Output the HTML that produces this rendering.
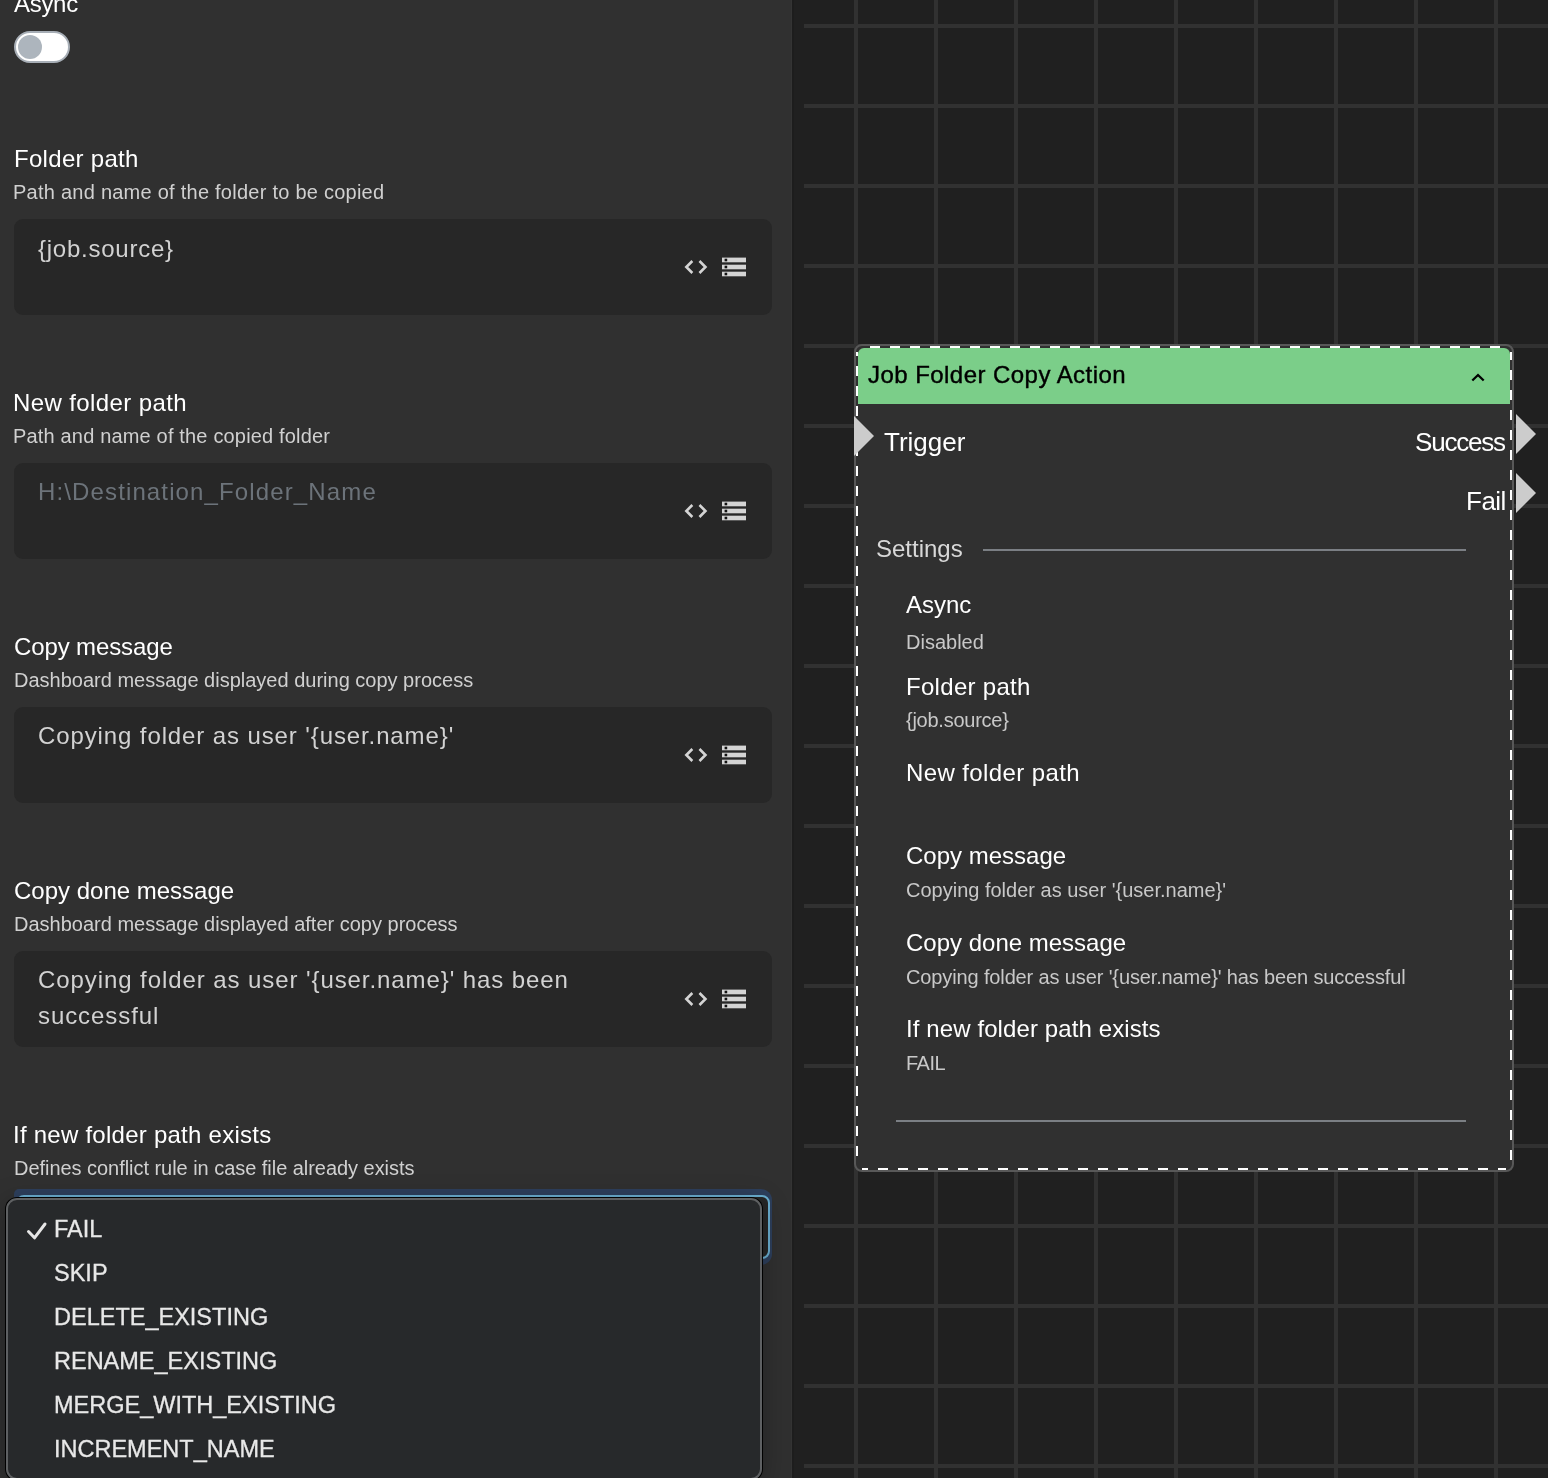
<!DOCTYPE html>
<html><head><meta charset="utf-8">
<style>
*{box-sizing:border-box;margin:0;padding:0}
html,body{width:1548px;height:1478px;overflow:hidden;background:#303030;font-family:"Liberation Sans",sans-serif}
.a{position:absolute;white-space:pre;line-height:1;will-change:transform}
.lbl{font-size:24px;color:#fff}
.dsc{font-size:20px;color:#d0d0d0}
.inp{position:absolute;left:14px;width:758px;height:96px;background:#272727;border-radius:9px}
.itx{font-size:24px;color:#d2d2d2}
#panel{position:absolute;left:0;top:0;width:792px;height:1478px;background:#303030}
#canvas{position:absolute;left:792px;top:0;width:756px;height:1478px;background:#202020;border-left:2px solid #1d1d1d}
#grid{position:absolute;left:804px;top:0;width:744px;height:1478px;
 background-image:linear-gradient(#313131 4px,transparent 4px),linear-gradient(90deg,#313131 4px,transparent 4px);
 background-size:80px 80px;background-position:0 24px,50px 0}
.pop{font-size:23.5px;color:#e8e8e8;-webkit-text-stroke:0.3px #e8e8e8}
.dash{position:absolute}
.nl{left:906px;font-size:24px;color:#fff}
.nv{left:906px;font-size:20px;color:#c8c8c8}
</style></head><body>
<div id="panel"></div>
<div id="canvas"></div>
<div id="grid"></div>
<div style="position:absolute;left:791px;top:0;width:1px;height:1478px;background:#343434"></div>

<!-- left panel -->
<div class="a lbl" style="left:14px;top:-7.9px;letter-spacing:-0.3px">Async</div>
<div style="position:absolute;left:14px;top:31px;width:56px;height:32px;border-radius:16px;background:#fff;border:2px solid #a7aeb6"></div>
<div style="position:absolute;left:18px;top:35px;width:24px;height:24px;border-radius:12px;background:#adb5bd"></div>

<div class="a lbl" style="left:14px;top:146.8px;letter-spacing:0.3px">Folder path</div>
<div class="a dsc" style="left:13px;top:181.9px;letter-spacing:0.25px">Path and name of the folder to be copied</div>
<div class="inp" style="top:219px"></div>
<div class="a itx" style="left:38px;top:236.5px;letter-spacing:0.75px">{job.source}</div>

<div class="a lbl" style="left:13px;top:390.7px;letter-spacing:0.4px">New folder path</div>
<div class="a dsc" style="left:13px;top:425.9px;letter-spacing:0.17px">Path and name of the copied folder</div>
<div class="inp" style="top:463px"></div>
<div class="a itx" style="left:38.3px;top:479.5px;letter-spacing:1.13px;color:#6c737a">H:\Destination_Folder_Name</div>

<div class="a lbl" style="left:13.5px;top:634.9px;letter-spacing:-0.12px">Copy message</div>
<div class="a dsc" style="left:14px;top:670.1px">Dashboard message displayed during copy process</div>
<div class="inp" style="top:707px"></div>
<div class="a itx" style="left:38px;top:723.7px;letter-spacing:0.89px">Copying folder as user '{user.name}'</div>

<div class="a lbl" style="left:14px;top:878.7px">Copy done message</div>
<div class="a dsc" style="left:14px;top:914.1px">Dashboard message displayed after copy process</div>
<div class="inp" style="top:951px"></div>
<div class="a itx" style="left:38px;top:967.5px;letter-spacing:0.92px">Copying folder as user '{user.name}' has been</div>
<div class="a itx" style="left:38px;top:1003.5px;letter-spacing:0.92px">successful</div>

<div class="a lbl" style="left:12.5px;top:1122.7px;letter-spacing:0.25px">If new folder path exists</div>
<div class="a dsc" style="left:13.5px;top:1158.1px;letter-spacing:-0.04px">Defines conflict rule in case file already exists</div>

<svg style="position:absolute;left:676px;top:250px" width="80" height="34" viewBox="0 0 80 34">
<polyline points="16.34,11 10.34,17 16.34,23" fill="none" stroke="#d4d4d4" stroke-width="2.6"/>
<polyline points="23.46,11 29.46,17 23.46,23" fill="none" stroke="#d4d4d4" stroke-width="2.6"/>
<rect x="46" y="7.6" width="24" height="4.7" fill="#d4d4d4"/><rect x="46" y="14.7" width="24" height="4.6" fill="#d4d4d4"/><rect x="46" y="21.7" width="24" height="4.6" fill="#d4d4d4"/>
<rect x="48.6" y="8.7" width="2.6" height="2.6" fill="#111"/><rect x="48.6" y="15.7" width="2.6" height="2.6" fill="#111"/><rect x="48.6" y="22.7" width="2.6" height="2.6" fill="#111"/>
</svg>
<svg style="position:absolute;left:676px;top:494px" width="80" height="34" viewBox="0 0 80 34">
<polyline points="16.34,11 10.34,17 16.34,23" fill="none" stroke="#d4d4d4" stroke-width="2.6"/>
<polyline points="23.46,11 29.46,17 23.46,23" fill="none" stroke="#d4d4d4" stroke-width="2.6"/>
<rect x="46" y="7.6" width="24" height="4.7" fill="#d4d4d4"/><rect x="46" y="14.7" width="24" height="4.6" fill="#d4d4d4"/><rect x="46" y="21.7" width="24" height="4.6" fill="#d4d4d4"/>
<rect x="48.6" y="8.7" width="2.6" height="2.6" fill="#111"/><rect x="48.6" y="15.7" width="2.6" height="2.6" fill="#111"/><rect x="48.6" y="22.7" width="2.6" height="2.6" fill="#111"/>
</svg>
<svg style="position:absolute;left:676px;top:738px" width="80" height="34" viewBox="0 0 80 34">
<polyline points="16.34,11 10.34,17 16.34,23" fill="none" stroke="#d4d4d4" stroke-width="2.6"/>
<polyline points="23.46,11 29.46,17 23.46,23" fill="none" stroke="#d4d4d4" stroke-width="2.6"/>
<rect x="46" y="7.6" width="24" height="4.7" fill="#d4d4d4"/><rect x="46" y="14.7" width="24" height="4.6" fill="#d4d4d4"/><rect x="46" y="21.7" width="24" height="4.6" fill="#d4d4d4"/>
<rect x="48.6" y="8.7" width="2.6" height="2.6" fill="#111"/><rect x="48.6" y="15.7" width="2.6" height="2.6" fill="#111"/><rect x="48.6" y="22.7" width="2.6" height="2.6" fill="#111"/>
</svg>
<svg style="position:absolute;left:676px;top:982px" width="80" height="34" viewBox="0 0 80 34">
<polyline points="16.34,11 10.34,17 16.34,23" fill="none" stroke="#d4d4d4" stroke-width="2.6"/>
<polyline points="23.46,11 29.46,17 23.46,23" fill="none" stroke="#d4d4d4" stroke-width="2.6"/>
<rect x="46" y="7.6" width="24" height="4.7" fill="#d4d4d4"/><rect x="46" y="14.7" width="24" height="4.6" fill="#d4d4d4"/><rect x="46" y="21.7" width="24" height="4.6" fill="#d4d4d4"/>
<rect x="48.6" y="8.7" width="2.6" height="2.6" fill="#111"/><rect x="48.6" y="15.7" width="2.6" height="2.6" fill="#111"/><rect x="48.6" y="22.7" width="2.6" height="2.6" fill="#111"/>
</svg>

<!-- select with focus ring -->
<div style="position:absolute;left:14px;top:1189px;width:758px;height:76px;border-radius:5px 11px 11px 5px;background:#2d3f5c"></div>
<div style="position:absolute;left:16px;top:1195px;width:754px;height:64px;border-radius:8px;background:#262626;border:2px solid #6aaed0"></div>

<!-- popup -->
<div style="position:absolute;left:5px;top:1197px;width:758px;height:284px;border-radius:12px;background:#000;box-shadow:0 6px 28px rgba(0,0,0,0.28)"></div>
<div style="position:absolute;left:6px;top:1198px;width:756px;height:282px;border-radius:11px;background:#27292b;border:2px solid #5e6062"></div>
<svg style="position:absolute;left:20px;top:1215px" width="32" height="32" viewBox="0 0 32 32"><polyline points="8.5,16.5 14.5,22.8 25,9" fill="none" stroke="#e6e6e6" stroke-width="3" stroke-linecap="round" stroke-linejoin="round"/></svg>
<div class="a pop" style="left:54px;top:1218.3px">FAIL</div>
<div class="a pop" style="left:54px;top:1262.1px">SKIP</div>
<div class="a pop" style="left:54px;top:1306.1px">DELETE_EXISTING</div>
<div class="a pop" style="left:54px;top:1350.1px">RENAME_EXISTING</div>
<div class="a pop" style="left:54px;top:1394.1px">MERGE_WITH_EXISTING</div>
<div class="a pop" style="left:54px;top:1438.1px">INCREMENT_NAME</div>

<!-- node -->
<div style="position:absolute;left:854px;top:344px;width:660px;height:828px;border-radius:8px;background:#303030;border:2px solid #585858"></div>
<div style="position:absolute;left:858px;top:348px;width:652px;height:56px;border-radius:6px 6px 0 0;background:#7bce89"></div>
<div class="dash" style="left:862px;top:346px;width:644px;height:2px;background-image:linear-gradient(90deg,#fff 0 10px,transparent 10px 20px);background-size:20px 2px;background-position:8px 0"></div>
<div class="dash" style="left:862px;top:1168px;width:644px;height:2px;background-image:linear-gradient(90deg,#fff 0 10px,transparent 10px 20px);background-size:20px 2px;background-position:16px 0"></div>
<div class="dash" style="left:856px;top:352px;width:2px;height:812px;background-image:linear-gradient(180deg,#fff 0 10px,transparent 10px 20px);background-size:2px 20px;background-position:0 14px"></div>
<div class="dash" style="left:1510px;top:352px;width:2px;height:812px;background-image:linear-gradient(180deg,#fff 0 10px,transparent 10px 20px);background-size:2px 20px;background-position:0 18px"></div>
<svg style="position:absolute;left:1460px;top:360px" width="40" height="35" viewBox="0 0 40 35"><polyline points="12.3,20.5 18,15 23.7,20.5" fill="none" stroke="#000" stroke-width="2.3"/></svg>
<div class="a" style="left:868px;top:362.7px;font-size:24px;color:#000;letter-spacing:0.45px;-webkit-text-stroke:0.4px #000">Job Folder Copy Action</div>
<svg style="position:absolute;left:854px;top:416px" width="20" height="40"><polygon points="0,0 20,20 0,40" fill="#cccccc"/></svg>
<svg style="position:absolute;left:1516px;top:414px" width="20" height="40"><polygon points="0,0 20,20 0,40" fill="#cccccc"/></svg>
<svg style="position:absolute;left:1516px;top:473px" width="20" height="40"><polygon points="0,0 20,20 0,40" fill="#cccccc"/></svg>
<div class="a" style="left:884px;top:429px;font-size:26px;color:#fff">Trigger</div>
<div class="a" style="right:43px;top:429px;font-size:26px;color:#fff;letter-spacing:-1.2px">Success</div>
<div class="a" style="right:42.5px;top:488px;font-size:26px;color:#fff;letter-spacing:-0.5px">Fail</div>
<div class="a" style="left:876px;top:537px;font-size:24px;color:#d8d8d8">Settings</div>
<div style="position:absolute;left:983px;top:549px;width:483px;height:2px;background:#7b7f84"></div>
<div class="a nl" style="top:592.7px">Async</div>
<div class="a nv" style="top:631.8px">Disabled</div>
<div class="a nl" style="top:674.6px;letter-spacing:0.3px">Folder path</div>
<div class="a nv" style="top:709.7px;letter-spacing:-0.25px">{job.source}</div>
<div class="a nl" style="top:761.3px;letter-spacing:0.4px">New folder path</div>
<div class="a nl" style="top:843.7px">Copy message</div>
<div class="a nv" style="top:879.9px">Copying folder as user '{user.name}'</div>
<div class="a nl" style="top:930.7px">Copy done message</div>
<div class="a nv" style="top:967.1px;letter-spacing:-0.13px">Copying folder as user '{user.name}' has been successful</div>
<div class="a nl" style="top:1017.2px;letter-spacing:0.1px">If new folder path exists</div>
<div class="a nv" style="top:1052.5px;letter-spacing:-0.5px">FAIL</div>
<div style="position:absolute;left:896px;top:1120px;width:570px;height:2px;background:#7b7f84"></div>
</body></html>
